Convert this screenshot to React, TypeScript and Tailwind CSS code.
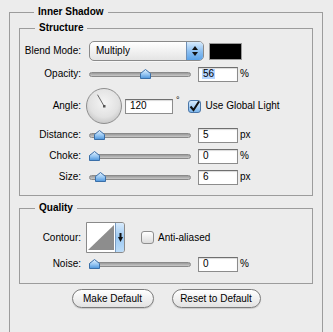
import type { FC, ReactNode } from 'react';

const font = { fontFamily: '"Liberation Sans", Arial, sans-serif' };

const Thumb: FC = () => (
  <svg width="11" height="10" viewBox="0 0 11 10">
    <defs>
      <linearGradient id="thumbGrad" x1="0" y1="0" x2="0" y2="1">
        <stop offset="0" stopColor="#e4f1fd" />
        <stop offset="0.5" stopColor="#9ccaf4" />
        <stop offset="1" stopColor="#4d95dc" />
      </linearGradient>
    </defs>
    <path d="M5.5 0.5 L10.5 4.5 L10.5 9.5 L0.5 9.5 L0.5 4.5 Z" fill="url(#thumbGrad)" stroke="#3a6fa8" strokeWidth="1" />
  </svg>
);

const Slider: FC<{ value: number }> = ({ value }) => (
  <div className="relative w-[102px] h-[16px]">
    <div className="absolute left-0 right-0 top-[6px] h-[5px] rounded-full border border-[#8a8a8a] bg-linear-to-b from-[#9a9a9a] to-[#c9c9c9]" />
    <div className="absolute top-[3px]" style={{ left: `${(value / 100) * 91}px` }}>
      <Thumb />
    </div>
  </div>
);

const NumberBox: FC<{ value: string; selected?: boolean }> = ({ value, selected }) => (
  <div className="w-[40px] h-[15px] border border-[#8c8c8c] border-t-[#6f6f6f] bg-white shadow-[inset_0_1px_1px_rgba(0,0,0,0.15)] flex items-center pl-[3px] text-[10px] leading-none">
    <span className={selected ? 'bg-[#b5d5ff] px-[1px]' : 'px-[1px]'}>{value}</span>
  </div>
);

const Label: FC<{ children: ReactNode }> = ({ children }) => (
  <div className="w-[61px] text-right text-[10px] leading-none shrink-0">{children}</div>
);

const SliderRow: FC<{ label: string; value: number; text: string; unit: string; selected?: boolean; className?: string }> = ({
  label,
  value,
  text,
  unit,
  selected,
  className,
}) => (
  <div className={`flex items-center h-[16px] ${className ?? ''}`}>
    <Label>{label}</Label>
    <div className="ml-[8px]">
      <Slider value={value} />
    </div>
    <div className="ml-[7px]">
      <NumberBox value={text} selected={selected} />
    </div>
    <span className="ml-[2px] text-[10px] leading-none">{unit}</span>
  </div>
);

const Checkbox: FC<{ checked?: boolean }> = ({ checked }) => (
  <div
    className={`w-[13px] h-[13px] rounded-[3px] border shrink-0 flex items-center justify-center ${
      checked
        ? 'border-[#4a76a8] bg-linear-to-b from-[#d6eafc] to-[#7db6ec]'
        : 'border-[#8e8e8e] bg-linear-to-b from-white to-[#dcdcdc]'
    }`}
  >
    {checked && (
      <svg width="11" height="11" viewBox="0 0 11 11">
        <path d="M1.5 5.5 L4.5 9 L10 0.5" fill="none" stroke="#111" strokeWidth="2" />
      </svg>
    )}
  </div>
);

const Dial: FC = () => (
  <svg width="38" height="38" viewBox="0 0 38 38">
    <defs>
      <radialGradient id="dialGrad" cx="0.5" cy="0.4" r="0.6">
        <stop offset="0" stopColor="#f4f4f4" />
        <stop offset="0.7" stopColor="#e2e2e2" />
        <stop offset="1" stopColor="#c8c8c8" />
      </radialGradient>
    </defs>
    <circle cx="19" cy="19" r="17.5" fill="url(#dialGrad)" stroke="#8f8f8f" strokeWidth="1" />
    <line x1="19" y1="19" x2="12.5" y2="7.7" stroke="#666" strokeWidth="1" />
    <rect x="18" y="18" width="2.5" height="2.5" fill="#555" />
  </svg>
);

// group box with its title sitting on the top line
const Group: FC<{ title: string; className?: string; children: ReactNode }> = ({ title, className, children }) => (
  <div className={`border border-[#9c9c9c] ${className ?? ''}`}>
    <div className="-mt-[8px] ml-[15px] w-fit px-[4px] bg-[#ececec] text-[10px] font-bold leading-[14px]">{title}</div>
    {children}
  </div>
);

export default function App() {
  return (
    <div className="w-[333px] h-[332px] overflow-hidden bg-[#ececec] text-black pl-[9px] pt-[12px]" style={font}>
      <Group title="Inner Shadow" className="w-[314px] px-[9px] pb-[40px]">
        {/* Structure */}
        <Group title="Structure" className="mt-[9px] pb-[10px]">
          <div className="flex items-center h-[20px] mt-[6px]">
            <Label>Blend Mode:</Label>
            <div className="ml-[8px] w-[115px] h-[20px] rounded-[5px] border border-[#8a8a8a] bg-linear-to-b from-white to-[#e4e4e4] flex items-center overflow-hidden shadow-[0_1px_0_rgba(255,255,255,0.6)]">
              <span className="flex-1 pl-[6px] text-[10px] leading-none">Multiply</span>
              <div className="w-[17px] h-full border-l border-[#6f8fb5] bg-linear-to-b from-[#d8ebfc] via-[#8fc1f1] to-[#5aa2e8] flex flex-col items-center justify-center gap-[2px]">
                <svg width="6" height="4" viewBox="0 0 6 4">
                  <path d="M3 0 L6 4 L0 4 Z" fill="#111" />
                </svg>
                <svg width="6" height="4" viewBox="0 0 6 4">
                  <path d="M0 0 L6 0 L3 4 Z" fill="#111" />
                </svg>
              </div>
            </div>
            <div className="ml-[5px] w-[33px] h-[17px] border border-[#9a9a9a] bg-black" />
          </div>

          <SliderRow label="Opacity:" value={56} text="56" unit="%" selected className="mt-[5px]" />

          <div className="flex items-center h-[38px] mt-[5px]">
            <Label>Angle:</Label>
            <div className="ml-[4px] flex">
              <Dial />
            </div>
            <div className="ml-[2px] w-[48px] h-[15px] border border-[#8c8c8c] border-t-[#6f6f6f] bg-white shadow-[inset_0_1px_1px_rgba(0,0,0,0.15)] flex items-center pl-[4px] text-[10px] leading-none">
              120
            </div>
            <span className="ml-[3px] self-start mt-[9px] text-[9px] leading-none">°</span>
            <div className="ml-[8px]">
              <Checkbox checked />
            </div>
            <span className="ml-[5px] text-[10px] leading-none">Use Global Light</span>
          </div>

          <SliderRow label="Distance:" value={5} text="5" unit="px" className="mt-[2px]" />
          <SliderRow label="Choke:" value={0} text="0" unit="%" className="mt-[5px]" />
          <SliderRow label="Size:" value={7} text="6" unit="px" className="mt-[5px]" />
        </Group>

        {/* Quality */}
        <Group title="Quality" className="mt-[12px] pb-[11px]">
          <div className="flex items-center h-[31px] mt-[7px]">
            <Label>Contour:</Label>
            <div className="ml-[5px] w-[39px] h-[31px] border border-[#8a8a8a] flex overflow-hidden rounded-r-[3px]">
              <svg width="28" height="29" viewBox="0 0 28 29" className="bg-white">
                <path d="M1 27 L27 2 L27 27 Z" fill="#8d8d8d" />
              </svg>
              <div className="flex-1 bg-linear-to-b from-[#d8ebfc] via-[#9cc9f3] to-[#bcdcf8] border-l border-[#7a9cc2] flex items-center justify-center">
                <svg width="5" height="9" viewBox="0 0 5 9">
                  <rect x="1.5" y="0" width="2" height="5" fill="#111" />
                  <path d="M0 4 L5 4 L2.5 9 Z" fill="#111" />
                </svg>
              </div>
            </div>
            <div className="ml-[16px]">
              <Checkbox />
            </div>
            <span className="ml-[4px] text-[10px] leading-none">Anti-aliased</span>
          </div>
          <SliderRow label="Noise:" value={0} text="0" unit="%" className="mt-[3px]" />
        </Group>

        <div className="flex justify-center gap-[18px] mt-[5px]">
          <button className="w-[82px] h-[19px] rounded-full border border-[#7c7c7c] bg-linear-to-b from-white to-[#e2e2e2] text-[10px] leading-none shadow-[0_1px_1px_rgba(0,0,0,0.15)]">
            Make Default
          </button>
          <button className="w-[89px] h-[19px] rounded-full border border-[#7c7c7c] bg-linear-to-b from-white to-[#e2e2e2] text-[10px] leading-none shadow-[0_1px_1px_rgba(0,0,0,0.15)]">
            Reset to Default
          </button>
        </div>
      </Group>
    </div>
  );
}
